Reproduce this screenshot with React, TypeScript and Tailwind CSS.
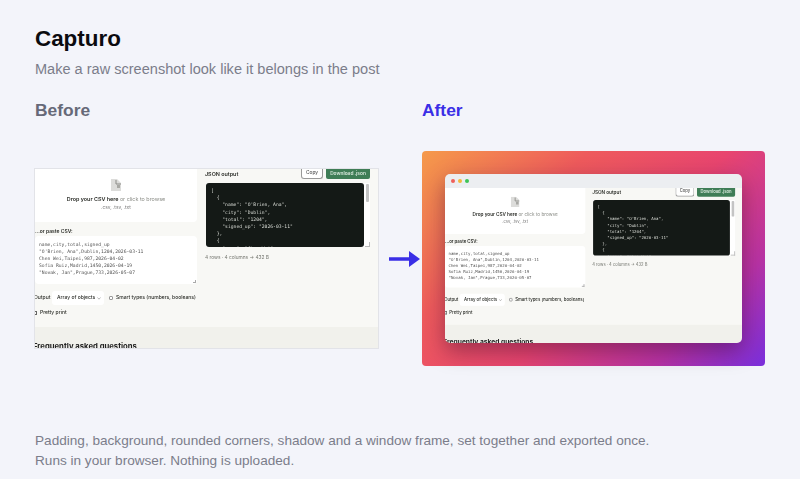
const csvLines = [
  'name,city,total,signed_up',
  '"O\'Brien, Ana",Dublin,1204,2026-03-11',
  'Chen Wei,Taipei,987,2026-04-02',
  'Sofia Ruiz,Madrid,1450,2026-04-19',
  '"Novak, Jan",Prague,733,2026-05-07',
]

const jsonLines = [
  '[',
  '  {',
  '    "name": "O\'Brien, Ana",',
  '    "city": "Dublin",',
  '    "total": "1204",',
  '    "signed_up": "2026-03-11"',
  '  },',
  '  {',
  '    "name": "Chen Wei",',
]

function FileIcon() {
  return (
    <svg width="10" height="12" viewBox="0 0 10 12">
      <path d="M0 0h6l4 4v8H0z" fill="#dcdcda" />
      <path d="M5 1v4h5" fill="none" stroke="#8c8c88" strokeWidth="1" />
      <path d="M6 6h3v3H6z" fill="#a8a8a4" />
    </svg>
  )
}

// The app screenshot that is shown raw on the left and framed on the right
function AppShot() {
  return (
    <div className="w-[343px] h-[179px] overflow-hidden bg-[#f8f8f5] flex flex-col blur-[0.35px] font-['Inter',sans-serif] text-[#2b2d28]">
      <div className="flex h-[158px] flex-none">
        <div className="w-[162px] flex-none flex flex-col">
          <div className="h-[53px] bg-white rounded-br-[4px] flex flex-col items-center pt-[10px]">
            <FileIcon />
            <div className="mt-[4px] text-[5.4px] leading-[8px] whitespace-nowrap text-[#8a8c86]">
              <span className="font-semibold text-[#2b2d28]">Drop your CSV here</span> or click to browse
            </div>
            <div className="mt-[1px] text-[4.8px] leading-[7px] text-[#777]">.csv, .tsv, .txt</div>
          </div>
          <div className="mt-[5px] text-[5px] leading-[8px] font-semibold whitespace-nowrap">...or paste CSV:</div>
          <div className="mt-[1px] h-[48px] relative bg-white rounded-[4px] pl-[4px] pt-[5px] font-['DejaVu_Sans_Mono',monospace] text-[4.7px] leading-[7px] text-[#555]">
            {csvLines.map((line) => (
              <div key={line} className="whitespace-nowrap">{line}</div>
            ))}
            <div className="absolute right-[1px] bottom-[1px] w-[3px] h-[3px] border-r border-b border-[#aaa]" />
          </div>
          <div className="mt-[7px] flex items-center h-[14px] text-[5px] whitespace-nowrap">
            <span className="w-[18px] -ml-[1px] flex-none font-medium">Output</span>
            <div className="w-[52px] h-[14px] flex-none bg-white rounded-[3px] flex items-center justify-between pl-[5px] pr-[3px] mr-[5px] font-medium">
              <span>Array of objects</span>
              <svg width="4" height="3" viewBox="0 0 4 3">
                <path d="M0.5 0.5 2 2.2 3.5 0.5" fill="none" stroke="#888" strokeWidth="0.6" />
              </svg>
            </div>
            <div className="w-[4px] h-[4px] border-[0.5px] border-[#999] bg-white rounded-[1px] mr-[3px] flex-none" />
            <span className="font-medium">Smart types (numbers, booleans)</span>
          </div>
          <div className="mt-[4px] flex items-center text-[5px] leading-[7px] font-medium whitespace-nowrap">
            <div className="w-[2px] h-[4px] border-y-[0.5px] border-r-[0.5px] border-[#666] mr-[3px]" />
            Pretty print
          </div>
        </div>

        <div className="w-[165px] ml-[8px] flex-none flex flex-col">
          <div className="h-[14px] flex-none flex justify-between">
            <span className="pt-[1px] text-[5.4px] leading-[8px] font-semibold">JSON output</span>
            <div className="flex gap-[3px]">
              <div className="w-[22px] h-[11px] -mt-[1px] bg-white border border-[#999] border-t-0 rounded-b-[3px] flex items-center justify-center text-[4.8px] font-medium text-[#555]">Copy</div>
              <div className="w-[44px] h-[11px] -mt-[1px] bg-[#3f7d56] rounded-b-[2px] flex items-center justify-center text-[4.8px] font-semibold text-[#d8e8dc]">Download .json</div>
            </div>
          </div>
          <div className="h-[64px] ml-[1px] flex bg-white">
            <div className="w-[158px] bg-[#141916] rounded-[3px] overflow-hidden pl-[5px] pt-[4px] font-['DejaVu_Sans_Mono',monospace] text-[4.7px] leading-[7.2px] text-[#d9dcd6] whitespace-pre">
              {jsonLines.map((line, i) => (
                <div key={i}>{line}</div>
              ))}
            </div>
            <div className="flex-1 flex flex-col items-center justify-between">
              <div className="w-[3px] h-[18px] mt-[1px] bg-[#c4c4c4] rounded-[1px]" />
              <div className="w-[5px] h-[5px] border-r border-b border-[#bbb]" />
            </div>
          </div>
          <div className="mt-[6px] text-[4.8px] leading-[8px] text-[#74766f] whitespace-nowrap">4 rows · 4 columns → 432 B</div>
        </div>
      </div>
      <div className="flex-1 bg-[#f1f1ec] flex flex-col justify-end overflow-hidden">
        <div className="-mb-[4px] -ml-[2px] text-[7.7px] leading-[10px] font-bold text-[#222] whitespace-nowrap">Frequently asked questions</div>
      </div>
    </div>
  )
}

export default function App() {
  return (
    <div className="w-[800px] h-[479px] overflow-hidden bg-[#f3f4fa] px-[35px] pt-[25px] font-['Liberation_Sans',Arial,sans-serif]">
      <h1 className="text-[22.4px] leading-[28px] font-bold text-[#0b0b0f]">Capturo</h1>
      <p className="mt-[6px] text-[14.56px] leading-[20px] text-[#7b7d8a]">Make a raw screenshot look like it belongs in the post</p>

      <div className="mt-[21px] flex text-[17.4px] leading-[20px] font-bold">
        <div className="w-[387px] text-[#666978]">Before</div>
        <div className="text-[#3a2ee6]">After</div>
      </div>

      <div className="mt-[31px] flex items-center">
        <div className="shadow-[0_0_0_1px_#e2e3e8]">
          <AppShot />
        </div>
        <div className="w-[44px] flex-none flex justify-end pr-[2px]">
          <svg width="31" height="16" viewBox="0 0 31 16">
            <path d="M0 6.2h20V0l11 8-11 8V9.8H0z" fill="#3a2ee6" />
          </svg>
        </div>
        <div className="w-[343px] h-[215px] flex-none p-[23px] rounded-[4px] bg-[linear-gradient(135deg,#f59a4a_0%,#ee5a5c_30%,#e8456f_55%,#b933a4_80%,#7a2fdc_100%)]">
          <div className="rounded-[5px] overflow-hidden shadow-[0_8px_22px_rgba(40,0,40,0.4)]">
            <div className="h-[14px] bg-[#eceef1] flex items-center gap-[3px] pl-[6px]">
              <span className="w-[4px] h-[4px] rounded-full bg-[#f0605a]" />
              <span className="w-[4px] h-[4px] rounded-full bg-[#f4b83c]" />
              <span className="w-[4px] h-[4px] rounded-full bg-[#3fc457]" />
            </div>
            <div className="w-[297px] h-[155px] overflow-hidden">
              <div className="origin-top-left scale-[0.866]">
                <AppShot />
              </div>
            </div>
          </div>
        </div>
      </div>

      <div className="mt-[65px] text-[13.6px] leading-[20px] text-[#7b7d8a]">
        <p>Padding, background, rounded corners, shadow and a window frame, set together and exported once.</p>
        <p>Runs in your browser. Nothing is uploaded.</p>
      </div>
    </div>
  )
}
